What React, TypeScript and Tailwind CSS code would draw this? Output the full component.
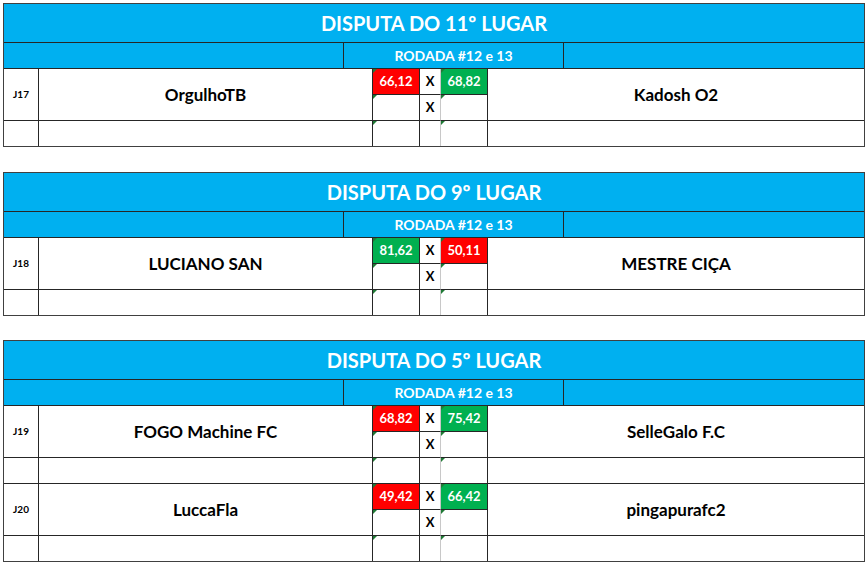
import { Fragment } from "react";

type Match = {
  code: string;
  home: string;
  away: string;
  homeScore: string;
  awayScore: string;
  homeWins: boolean;
};

type Disputa = {
  title: string;
  gap: string;
  matches: Match[];
};

const DISPUTAS: Disputa[] = [
  {
    title: "DISPUTA DO 11º LUGAR",
    gap: "mt-[3px]",
    matches: [
      { code: "J17", home: "OrgulhoTB", away: "Kadosh O2", homeScore: "66,12", awayScore: "68,82", homeWins: false },
    ],
  },
  {
    title: "DISPUTA DO 9º LUGAR",
    gap: "mt-[25px]",
    matches: [
      { code: "J18", home: "LUCIANO SAN", away: "MESTRE CIÇA", homeScore: "81,62", awayScore: "50,11", homeWins: true },
    ],
  },
  {
    title: "DISPUTA DO 5º LUGAR",
    gap: "mt-[24px]",
    matches: [
      { code: "J19", home: "FOGO Machine FC", away: "SelleGalo F.C", homeScore: "68,82", awayScore: "75,42", homeWins: false },
      { code: "J20", home: "LuccaFla", away: "pingapurafc2", homeScore: "49,42", awayScore: "66,42", homeWins: false },
    ],
  },
];

// little green corner Excel puts on "number stored as text" cells
function Flag() {
  return (
    <span className="absolute left-0 top-0 h-0 w-0 border-t-[4px] border-r-[4px] border-t-[#1f7a35] border-r-transparent" />
  );
}

function ScoreCell({ value, win }: { value?: string; win?: boolean }) {
  const bg = value === undefined ? "bg-white" : win ? "bg-[#00b050]" : "bg-[#ff0000]";
  return (
    <div className={`relative flex items-center justify-center border-r border-b border-[#262626] text-[13px] font-bold text-white ${bg}`}>
      <Flag />
      {value}
    </div>
  );
}

function MatchRows({ m, last }: { m: Match; last: boolean }) {
  const rows = last ? "grid-rows-[26px_26px_25px]" : "grid-rows-[26px_26px_26px]";
  const b = last ? "" : "border-b";
  return (
    <div className={`grid grid-cols-[35px_334px_47px_21px_47px_1fr] ${rows}`}>
      <div className="row-span-2 flex items-center justify-center border-r border-b border-[#262626] text-[10px] font-bold text-black">
        {m.code}
      </div>
      <div className="row-span-2 flex items-center justify-center border-r border-b border-[#262626] text-[17px] font-bold text-black">
        {m.home}
      </div>
      <ScoreCell value={m.homeScore} win={m.homeWins} />
      <div className="flex items-center justify-center border-r border-b border-r-[#c8c8c8] border-b-[#262626] text-[13px] font-bold text-black">
        X
      </div>
      <ScoreCell value={m.awayScore} win={!m.homeWins} />
      <div className="row-span-2 flex items-center justify-center border-b border-[#262626] text-[17px] font-bold text-black">
        {m.away}
      </div>

      <ScoreCell />
      <div className="flex items-center justify-center border-r border-b border-r-[#c8c8c8] border-b-[#262626] text-[13px] font-bold text-black">
        X
      </div>
      <ScoreCell />

      <div className={`border-r border-[#262626] ${b}`} />
      <div className={`border-r border-[#262626] ${b}`} />
      <div className={`relative border-r border-[#262626] ${b}`}>
        <Flag />
      </div>
      <div className={`border-r border-r-[#c8c8c8] border-b-[#262626] ${b}`} />
      <div className={`relative border-r border-[#262626] ${b}`}>
        <Flag />
      </div>
      <div className={`border-[#262626] ${b}`} />
    </div>
  );
}

export default function App() {
  return (
    <div className="min-h-screen w-[868px] bg-white pl-[3px] font-['Lato',sans-serif]">
      {DISPUTAS.map((d) => (
        <div key={d.title} className={`${d.gap} w-[862px] border border-[#404040]`}>
          <div className="flex h-[39px] items-center justify-center border-b border-[#262626] bg-[#00b0f0] text-[20px] font-bold text-white">
            {d.title}
          </div>
          <div className="grid h-[26px] grid-cols-[340px_220px_1fr] border-b border-[#262626] bg-[#00b0f0] text-[14px] font-bold text-white">
            <div className="border-r border-[#262626]" />
            <div className="flex items-center justify-center border-r border-[#262626]">
              RODADA #12 e 13
            </div>
            <div />
          </div>
          {d.matches.map((m, i) => (
            <Fragment key={m.code}>
              <MatchRows m={m} last={i === d.matches.length - 1} />
            </Fragment>
          ))}
        </div>
      ))}
    </div>
  );
}
